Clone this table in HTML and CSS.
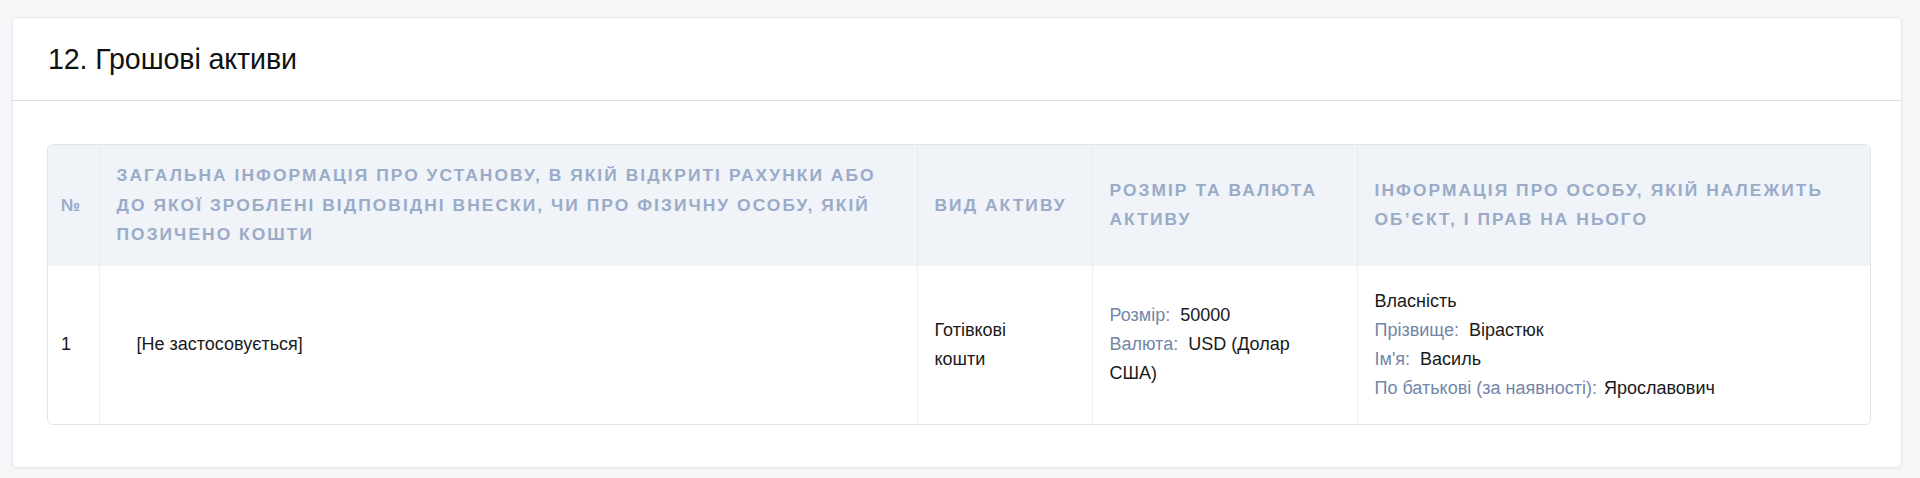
FILE: index.html
```html
<!DOCTYPE html>
<html lang="uk">
<head>
<meta charset="utf-8">
<title>12. Грошові активи</title>
<link rel="stylesheet" href="styles.css">
</head>
<body>
<section class="card">
  <header class="card-head">
    <h2 class="card-title">12. Грошові активи</h2>
  </header>
  <div class="card-body">
    <div class="table-wrap">
      <table class="grid">
        <colgroup>
          <col class="c-num">
          <col class="c-info">
          <col class="c-kind">
          <col class="c-size">
          <col class="c-owner">
        </colgroup>
        <thead>
          <tr>
            <th>№</th>
            <th>Загальна інформація про установу, в якій відкриті рахунки або до якої зроблені відповідні внески, чи про фізичну особу, якій позичено кошти</th>
            <th>Вид активу</th>
            <th>Розмір та валюта активу</th>
            <th>Інформація про особу, якій належить об’єкт, і прав на нього</th>
          </tr>
        </thead>
        <tbody>
          <tr>
            <td>1</td>
            <td><div class="indent">[Не застосовується]</div></td>
            <td>Готівкові кошти</td>
            <td>
              <div><span class="lbl">Розмір:</span>50000</div>
              <div><span class="lbl">Валюта:</span>USD (Долар США)</div>
            </td>
            <td>
              <div>Власність</div>
              <div><span class="lbl">Прізвище:</span>Вірастюк</div>
              <div><span class="lbl">Ім'я:</span>Василь</div>
              <div><span class="lbl lbl-tight">По батькові (за наявності):</span>Ярославович</div>
            </td>
          </tr>
        </tbody>
      </table>
    </div>
  </div>
</section>
</body>
</html>
```
FILE: styles.css
```css
* { box-sizing: border-box; }

html, body {
  margin: 0;
  padding: 0;
  background: #f5f6f8;
}

body {
  padding: 17px 18px 13px 12px;
  font-family: "Liberation Sans", Arial, Helvetica, sans-serif;
  color: #1a1a1a;
}

.card {
  background: #ffffff;
  border: 1px solid #e4e8ee;
  border-radius: 5px;
  box-shadow: 0 1px 2px rgba(30, 40, 60, 0.04);
}

.card-head {
  height: 83px;
  display: flex;
  align-items: center;
  padding: 0 35px;
  border-bottom: 1px solid #dcdfe4;
}

.card-title {
  margin: 0;
  font-size: 28.6px;
  font-weight: 400;
  color: #111111;
  letter-spacing: -0.1px;
}

.card-body {
  padding: 43px 30px 42px 34px;
}

.table-wrap {
  border: 1px solid #dfe3ea;
  border-radius: 6px;
  overflow: hidden;
}

.grid {
  width: 100%;
  border-collapse: collapse;
  table-layout: fixed;
}

.c-num { width: 51px; }
.c-info { width: 818px; }
.c-kind { width: 175px; }
.c-size { width: 265px; }

.grid th {
  background: #f0f3f8;
  color: #9aabc8;
  font-size: 17.4px;
  font-weight: 700;
  text-transform: uppercase;
  letter-spacing: 2.05px;
  line-height: 29.5px;
  text-align: left;
  vertical-align: middle;
  padding: 16px 17px;
  border-left: 1px solid #e8ecf2;
}

.grid td {
  font-size: 18px;
  line-height: 29px;
  color: #1a1a1a;
  vertical-align: middle;
  padding: 21px 40px 21px 17px;
  border-left: 1px solid #edf0f4;
}

.grid th:first-child,
.grid td:first-child {
  border-left: 0;
  padding-left: 13px;
  padding-right: 8px;
}

.indent {
  padding-left: 20px;
}

.lbl {
  color: #7386a8;
  margin-right: 10px;
}

.lbl-tight {
  margin-right: 7px;
}
```
